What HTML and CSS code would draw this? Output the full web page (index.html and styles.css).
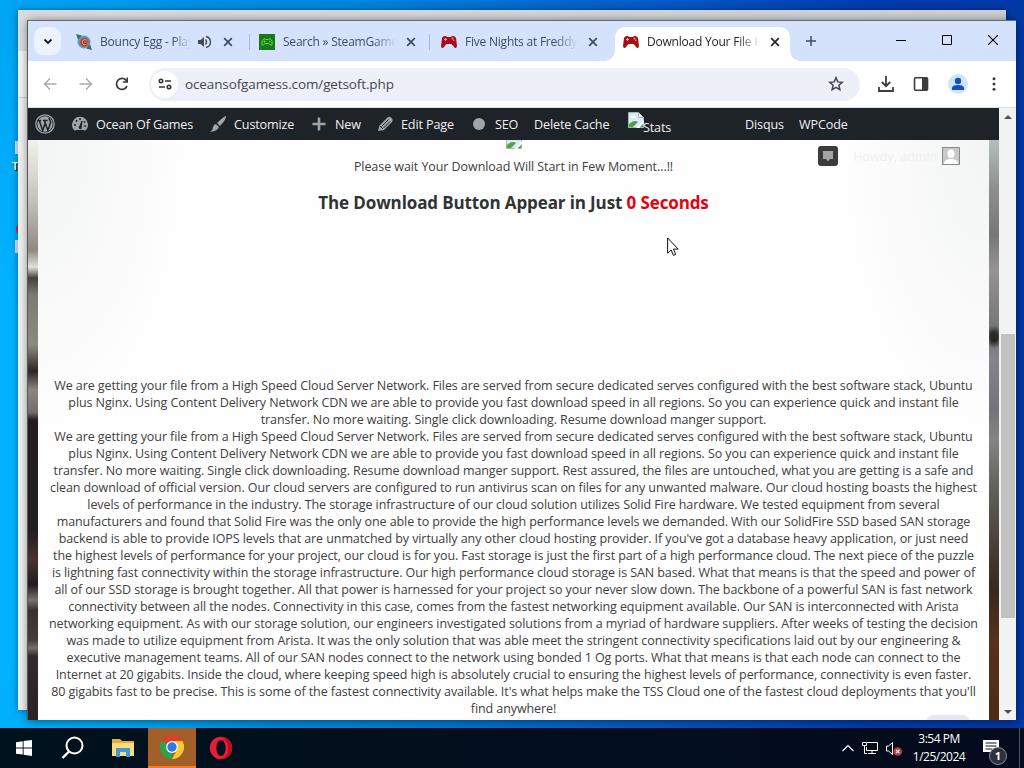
FILE: index.html
```html
<!DOCTYPE html>
<html lang="en">
<head>
  <meta charset="UTF-8" />
  <meta name="viewport" content="width=device-width, initial-scale=1.0"/>
  <title>Download Your File</title>
  <link rel="stylesheet" href="styles.css">
</head>
<body>

  <svg class="sprites" aria-hidden="true">
    <symbol id="x" viewBox="0 0 10 10"><path d="M1.2 1.2l7.6 7.6M8.8 1.2L1.2 8.8" fill="none" stroke="currentColor" stroke-width="1.7"/></symbol>
    <symbol id="gamepad" viewBox="0 0 16 16">
      <path d="M1 4q1-2.500 4-2l1 1h4l1-1q3-.5 4 2l1 8q-.5 3-2.500 1.500L10.500 10h-5L2.500 13.500Q.5 15 0 12z" fill="#a80d14"/>
      <path d="M3 5.500h3M4.500 4v3" stroke="#e9a0a0" stroke-width="1"/>
      <circle cx="11.500" cy="4.500" r="1" fill="#e9a0a0"/><circle cx="12.800" cy="6.300" r=".8" fill="#e9a0a0"/>
    </symbol>
    <symbol id="broken" viewBox="0 0 16 16">
      <path d="M.5.5h10l5 5v10H.5z" fill="#dce9f7" stroke="#a9b4b5"/>
      <path d="M10.500.5v5h5z" fill="#fff" stroke="#a9b4b5"/>
      <path d="M3 6q0-2 2-2 2-1.500 3 1v1z" fill="#fff"/>
      <path d="M1 15v-3q5-5 9-2l-5 5z" fill="#54a043"/>
      <path d="M16 8L8 16h3l5-5z" fill="#fff"/><path d="M12 15l3-3v3z" fill="#54a043"/>
    </symbol>
  </svg>

  <!-- desktop icons half hidden by the windows -->
  <div class="desk-icon one"><i></i><b>T</b></div>
  <div class="desk-icon two"><u></u><i></i></div>

  <div class="window-back"><div class="back-tabs"></div><div class="back-bar"></div></div>

  <div class="window">
    <div class="tabs">
      <div class="tab-search"><svg width="10" height="7" viewBox="0 0 10 7"><path d="M1.500 1.500L5 5l3.500-3.500" fill="none" stroke="#1b1d21" stroke-width="1.900"/></svg></div>
      <div class="tab first">
        <svg class="fav" viewBox="0 0 16 16"><circle cx="8" cy="8" r="6.500" fill="#4fa3cf"/><path d="M0 0l6 1.500L2 6zM16 16l-6-1.500 4-4.500z" fill="#3f7568"/><circle cx="8.200" cy="8.200" r="4.800" fill="#dd4f2c"/><path d="M10.800 6.300Q7 4.500 6.200 8.300q.3 3.200 4 1.900" fill="none" stroke="#2f3d8a" stroke-width="2.400"/><path d="M10.800 6.300Q7 4.500 6.200 8.300q.3 3.200 4 1.900" fill="none" stroke="#ff8a4a" stroke-width="1.200"/></svg>
        <span class="title short">Bouncy Egg - Play</span>
        <svg class="sound" viewBox="0 0 14 14"><path d="M1 5v4h2.500L7 12V2L3.500 5z" fill="#454b59"/><path d="M8.500 4.500q2 2.500 0 5M9 1.500q4.500 1 4.500 5.500T9 12.500" fill="none" stroke="#454b59" stroke-width="1.400"/></svg>
        <svg class="close"><use href="#x"/></svg>
      </div>
      <div class="tab">
        <svg class="fav" viewBox="0 0 16 16"><path d="M0 0h16v16H0z" fill="#167b16"/><path d="M3 11q-1-5 2-6.500l1.500 1h3l1.500-1Q14 6 13 11q-1.500 1-3-1.500H6Q4.500 12 3 11zM4.500 7.500h2M5.500 6.500v2M10 7.500h1.500" fill="none" stroke="#65d94f" stroke-width="1"/></svg>
        <span class="title">Search » SteamGame</span>
        <svg class="close"><use href="#x"/></svg>
      </div>
      <div class="tab">
        <svg class="fav"><use href="#gamepad"/></svg>
        <span class="title">Five Nights at Freddy</span>
        <svg class="close"><use href="#x"/></svg>
      </div>
      <div class="tab active">
        <svg class="fav"><use href="#gamepad"/></svg>
        <span class="title">Download Your File H</span>
        <svg class="close"><use href="#x"/></svg>
      </div>
      <svg class="new-tab" width="10" height="10" viewBox="0 0 10 10"><path d="M5 0v10M0 5h10" stroke="#3f4a66" stroke-width="1.500"/></svg>
      <div class="controls">
        <svg width="10" height="10" viewBox="0 0 10 10"><path d="M0 5.500h10" stroke="#000"/></svg>
        <svg width="10" height="10" viewBox="0 0 10 10"><path d="M.5.5h9v9h-9z" fill="none" stroke="#000"/></svg>
        <svg width="10" height="10" viewBox="0 0 10 10"><path d="M0 0l10 10M10 0L0 10" stroke="#000" stroke-width="1.100"/></svg>
      </div>
    </div>

    <div class="toolbar">
      <svg class="nav" viewBox="0 0 14 14"><path d="M13.500 7H2M7 1.500L1.500 7 7 12.500" fill="none" stroke="#abadb1" stroke-width="1.500"/></svg>
      <svg class="nav" viewBox="0 0 14 14"><path d="M.5 7H12M7 1.500L12.500 7 7 12.500" fill="none" stroke="#abadb1" stroke-width="1.500"/></svg>
      <svg class="nav" viewBox="0 0 14 14"><path d="M12 9.200A5.500 5.500 0 1 1 11 3.200L12.500 5" fill="none" stroke="#36383b" stroke-width="1.700"/><path d="M13 .5v5.200H7.800V4.200h3.600V.5z" fill="#36383b"/></svg>
      <div class="address">
        <span class="site-info"><svg width="14" height="12" viewBox="0 0 14 12"><circle cx="3" cy="3" r="1.700"/><path d="M7 3h6M1 9h6"/><circle cx="11" cy="9" r="1.700"/></svg></span>
        <span class="url">oceansofgamess.com/getsoft.php</span>
        <svg class="star" width="16" height="16" viewBox="0 0 16 16"><path d="M8 1.700l1.800 4.200 4.500.4-3.400 3 1 4.500L8 11.400l-3.900 2.400 1-4.500-3.400-3 4.500-.4z" fill="none" stroke="#44464a" stroke-width="1.500"/></svg>
      </div>
      <div class="actions">
        <svg width="16" height="16" viewBox="0 0 16 16"><path d="M8 0v10M3.800 6L8 10.200 12.200 6M1 11v4h14v-4" fill="none" stroke="#3c3d40" stroke-width="1.800"/></svg>
        <svg width="16" height="16" viewBox="0 0 16 16"><rect x="1.500" y="1.800" width="13" height="12.400" rx="1" fill="none" stroke="#3c3d40" stroke-width="1.600"/><path d="M9 2h5.500v12H9z" fill="#3c3d40"/></svg>
        <svg width="20" height="20" viewBox="0 0 20 20"><circle cx="10" cy="10" r="10" fill="#d0e2fc"/><circle cx="10" cy="7" r="3.200" fill="#1550b8"/><path d="M4 16v-2q0-3 6-3t6 3v2z" fill="#1550b8"/></svg>
        <svg class="kebab" width="4" height="16" viewBox="0 0 4 16"><circle cx="2" cy="2.700" r="1.500"/><circle cx="2" cy="8" r="1.500"/><circle cx="2" cy="13.300" r="1.500"/></svg>
      </div>
    </div>

    <div class="viewport">
      <div class="page">
        <div class="adminbar">
          <svg class="wp" viewBox="0 0 20 20"><circle cx="10" cy="10" r="9.200" fill="none" stroke="#a0a5aa" stroke-width="1.300"/><circle cx="10" cy="10" r="7.700" fill="#a0a5aa"/><path d="M2.500 6.500h3.800M8 6.500h4.500M4.200 6.500l3.500 10L10.200 9M9.300 6.500l3.600 10L15.600 8.500Q15 5 13.500 4" fill="none" stroke="#1d2327" stroke-width="1.500"/></svg>
          <a class="item games"><svg viewBox="0 0 16 16"><path d="M2 14A8 8 0 1 1 14 14q-1 1-2 0H4q-1 1-2 0z" fill="#a0a5aa"/><path d="M7 12l3-7-1 8z" fill="#1d2327" stroke="#1d2327"/><g fill="#1d2327"><circle cx="3" cy="9" r="1"/><circle cx="4.500" cy="5" r="1"/><circle cx="8" cy="3.200" r="1"/><circle cx="12.500" cy="6" r="1"/><circle cx="13" cy="10" r="1"/></g></svg>Ocean Of Games</a>
          <a class="item customize"><svg viewBox="0 0 16 16"><path d="M16 0q.5 3-6 10L7 7q6-6 9-7zM6 8l3 3q-1 4-9 5 3-2 3-5 1-3 3-3z" fill="#a0a5aa"/></svg>Customize</a>
          <a class="item new"><svg viewBox="0 0 16 16"><path d="M8 1.500v13M1.500 8h13" stroke="#a0a5aa" stroke-width="2.600"/></svg>New</a>
          <a class="item edit"><svg viewBox="0 0 16 16"><path d="M1 15l1.500-5.500 8-8q2-1.500 4 .5t.5 4l-8 8z" fill="#a0a5aa"/><path d="M4.500 10.500l7-7M6.500 12l6.500-6.500M3 10l3 3" stroke="#1d2327" fill="none"/></svg>Edit Page</a>
          <a class="item seo"><i></i>SEO</a>
          <a class="item cache">Delete Cache</a>
          <a class="item stats"><svg viewBox="0 0 16 16"><use href="#broken"/></svg><span>Stats</span></a>
          <a class="item disqus">Disqus</a>
          <a class="item">WPCode</a>
        </div>
        <div class="site">
          <div class="content">
            <div class="missing"><svg viewBox="0 0 16 16"><use href="#broken"/></svg></div>
            <p class="wait">Please wait Your Download Will Start in Few Moment...!!</p>
            <h2>The Download Button Appear in Just <span>0 Seconds</span></h2>
            <p class="about">
              We are getting your file from a High Speed Cloud Server Network. Files are served from secure dedicated serves configured with the best software stack, Ubuntu<br>
              plus Nginx. Using Content Delivery Network CDN we are able to provide you fast download speed in all regions. So you can experience quick and instant file<br>
              transfer. No more waiting. Single click downloading. Resume download manger support.<br>
              We are getting your file from a High Speed Cloud Server Network. Files are served from secure dedicated serves configured with the best software stack, Ubuntu<br>
              plus Nginx. Using Content Delivery Network CDN we are able to provide you fast download speed in all regions. So you can experience quick and instant file<br>
              transfer. No more waiting. Single click downloading. Resume download manger support. Rest assured, the files are untouched, what you are getting is a safe and<br>
              clean download of official version. Our cloud servers are configured to run antivirus scan on files for any unwanted malware. Our cloud hosting boasts the highest<br>
              levels of performance in the industry. The storage infrastructure of our cloud solution utilizes Solid Fire hardware. We tested equipment from several<br>
              manufacturers and found that Solid Fire was the only one able to provide the high performance levels we demanded. With our SolidFire SSD based SAN storage<br>
              backend is able to provide IOPS levels that are unmatched by virtually any other cloud hosting provider. If you've got a database heavy application, or just need<br>
              the highest levels of performance for your project, our cloud is for you. Fast storage is just the first part of a high performance cloud. The next piece of the puzzle<br>
              is lightning fast connectivity within the storage infrastructure. Our high performance cloud storage is SAN based. What that means is that the speed and power of<br>
              all of our SSD storage is brought together. All that power is harnessed for your project so your never slow down. The backbone of a powerful SAN is fast network<br>
              connectivity between all the nodes. Connectivity in this case, comes from the fastest networking equipment available. Our SAN is interconnected with Arista<br>
              networking equipment. As with our storage solution, our engineers investigated solutions from a myriad of hardware suppliers. After weeks of testing the decision<br>
              was made to utilize equipment from Arista. It was the only solution that was able meet the stringent connectivity specifications laid out by our engineering &amp;<br>
              executive management teams. All of our SAN nodes connect to the network using bonded 1 Og ports. What that means is that each node can connect to the<br>
              Internet at 20 gigabits. Inside the cloud, where keeping speed high is absolutely crucial to ensuring the highest levels of performance, connectivity is even faster.<br>
              80 gigabits fast to be precise. This is some of the fastest connectivity available. It's what helps make the TSS Cloud one of the fastest cloud deployments that you'll<br>
              find anywhere!
            </p>
            <div class="account">
              <span class="notes"><svg width="12" height="12" viewBox="0 0 12 12"><path d="M1 1h10v8H8l-2 2.500L4 9H1z" fill="#a5a5a5"/></svg></span>
              <span class="howdy">Howdy, admin</span>
              <svg class="avatar" viewBox="0 0 18 18"><path d="M.5.5h17v17H.5z" fill="#c9c9c9" stroke="#888"/><ellipse cx="9" cy="6.800" rx="3.500" ry="4.200" fill="#fff"/><path d="M2 17q0-4 5-5h4q5 1 5 5z" fill="#fff"/></svg>
            </div>
            <div class="bubble"></div>
          </div>
        </div>
      </div>
      <div class="scrollbar"><i class="up"></i><div class="thumb"></div><i class="down"></i></div>
    </div>
  </div>

  <svg class="cursor" width="12" height="20" viewBox="0 0 12 20"><path d="M.6 1v15.200l3.500-3.300 2.300 5.500 2.300-1-2.300-5.300h4.800z" fill="#fff" stroke="#111"/></svg>

  <div class="taskbar">
    <div class="app"><svg width="16" height="16" viewBox="0 0 16 16"><path d="M0 2.300l6.700-1v6.200H0zM7.600 1.100L16 0v7.500H7.600zM0 8.400h6.700v6.200L0 13.700zM7.600 8.400H16V16l-8.400-1.200z" fill="#fff"/></svg></div>
    <div class="app"><svg width="24" height="24" viewBox="0 0 24 24"><circle cx="13.500" cy="9.500" r="8" fill="none" stroke="#fff" stroke-width="2"/><path d="M8 15.500L1.500 22" stroke="#fff" stroke-width="2.400"/></svg></div>
    <div class="app"><svg width="22" height="20" viewBox="0 0 22 20"><path d="M0 1h8l2 2h12v15H0z" fill="#e4ad35"/><path d="M0 5h22v13H0z" fill="#fbdc7c"/><path d="M4 10h14v9h-4v-5H8v5H4z" fill="#4199d3"/></svg></div>
    <div class="app current"><svg width="24" height="24" viewBox="0 0 24 24"><path d="M12 12L1.600 6A12 12 0 0 1 22.400 6z" fill="#e33b2e"/><path d="M12 12V24A12 12 0 0 1 1.600 6z" fill="#2da24c"/><path d="M12 6h10.400A12 12 0 0 1 12 24l5-9z" fill="#fcc934"/><path d="M12 12L6.800 15 1.600 6z" fill="#2da24c"/><circle cx="12" cy="12" r="6" fill="#fff"/><circle cx="12" cy="12" r="4.700" fill="#2f78e4"/></svg></div>
    <div class="app"><svg width="24" height="24" viewBox="0 0 24 24"><path d="M12 .8A11.200 11.200 0 1 0 12 23.200 11.200 11.200 0 0 0 12 .8zm0 3.200c2.600 0 4.600 3.500 4.600 8s-2 8-4.600 8-4.600-3.500-4.600-8 2-8 4.600-8z" fill="#eb1d34" fill-rule="evenodd"/><path d="M12 .8q11 1 11.200 11.200Q23 22 12 23.200q8-3 7-11.200.5-8-7-11.200z" fill="#b50f22"/></svg></div>
    <div class="tray">
      <svg width="12" height="8" viewBox="0 0 12 8"><path d="M.5 7L6 1.500 11.500 7" fill="none" stroke="#fff" stroke-width="1.200"/></svg>
      <svg width="16" height="14" viewBox="0 0 16 14"><path d="M5 1.500h10.500v8H4.500V6M10 9.500v3M6 12.500h8M.5 1.500h4v3h-4zM2.500 4.500v8H5" fill="none" stroke="#fff"/></svg>
      <svg width="17" height="15" viewBox="0 0 17 15"><path d="M.5 5v5h2L6.500 13.500v-12L2.500 5z" fill="none" stroke="#fff"/><circle cx="11.700" cy="10.500" r="4.300" fill="#d13438"/><path d="M10 8.800l3.400 3.400M13.400 8.800L10 12.200" stroke="#fff" stroke-width="1.200"/></svg>
    </div>
    <div class="clock">3:54 PM<br>1/25/2024</div>
    <div class="notify"><svg width="16" height="16" viewBox="0 0 16 16"><path d="M0 0h16v12h-5v4l-4-4H0z" fill="#fff"/><path d="M2.500 3h11M2.500 6h11M2.500 9h7" stroke="#071024" stroke-width="1.200"/></svg><b>1</b></div>
    <div class="show-desktop"></div>
  </div>

</body>
</html>
```

FILE: styles.css
```css
* {
  box-sizing: border-box;
}

body {
  margin: 0;
  width: 1024px;
  height: 768px;
  overflow: hidden;
  position: relative;
  font-family: "Open Sans", "Noto Sans", sans-serif;
  background:
    radial-gradient(ellipse 300px 600px at 0 480px, #00b2ff 30%, transparent),
    linear-gradient(90deg, #009ff0 0%, #0085dc 35%, #0058c8 65%, #003bb0 85%, #0039a6 100%);
}

svg {
  flex: none;
  display: block;
}

.sprites {
  position: absolute;
  width: 0;
  height: 0;
}

.desk-icon {
  position: absolute;
  left: 12px;
  width: 6px;
  overflow: hidden;
  color: #fff;
}

.desk-icon i {
  display: block;
  width: 3px;
  height: 13px;
  margin-left: 3px;
  background: #d9e8f2;
}

.desk-icon b {
  display: block;
  font-size: 11px;
  line-height: 12px;
  margin-top: 6px;
  text-shadow: 1px 1px 1px #000;
}

.one {
  top: 141px;
}

.two {
  top: 221px;
}

.two u {
  display: block;
  width: 16px;
  height: 16px;
  margin: 0 0 3px 4px;
  border-radius: 50%;
  background: #c8284c;
}

/* windows */
.window-back {
  position: absolute;
  left: 18px;
  top: 10px;
  width: 988px;
  height: 700px;
  background: #f0f0f0;
  box-shadow: 0 0 7px rgba(0, 0, 0, 0.4);
}

.back-tabs {
  height: 41px;
  background: linear-gradient(90deg, #dcdce0, #cdcfd2);
}

.back-bar {
  height: 47px;
  border-bottom: 1px solid #cbd3d8;
  background: #f3f4f6;
}

.window {
  position: absolute;
  left: 28px;
  top: 20px;
  width: 988px;
  height: 700px;
  display: flex;
  flex-direction: column;
  border-top: 1px solid #626d77;
  background: #fff;
  box-shadow: -1px 0 0 #55595c, 0 1px 9px rgba(0, 0, 0, 0.5);
}

.tabs {
  display: flex;
  align-items: center;
  height: 40px;
  background: #d5e2fc;
}

.tab-search {
  display: flex;
  align-items: center;
  justify-content: center;
  width: 27px;
  height: 28px;
  margin: 0 8px 0 6px;
  border-radius: 9px;
  background: #ecf2fe;
}

.tab {
  display: flex;
  align-items: center;
  position: relative;
  width: 182px;
  height: 34px;
  padding-left: 8px;
  margin-top: 1px;
  color: #414b62;
}

.first {
  width: 184px;
  padding-left: 7px;
}

.tab:nth-child(2)::after,
.tab:nth-child(3)::after {
  content: "";
  position: absolute;
  right: 3px;
  top: 9px;
  width: 1px;
  height: 16px;
  background: #a5b9df;
}

.first + .tab {
  margin-left: -2px;
}

.fav {
  width: 16px;
  height: 16px;
  margin-right: 8px;
}

.title {
  width: 113px;
  overflow: hidden;
  white-space: nowrap;
  font-size: 12px;
  letter-spacing: -0.22px;
  -webkit-mask-image: linear-gradient(90deg, #000 80%, transparent);
  mask-image: linear-gradient(90deg, #000 80%, transparent);
}

.short {
  width: 91px;
}

.sound {
  width: 14px;
  height: 14px;
  margin: 0 2px 0 6px;
}

.close {
  width: 10px;
  height: 10px;
  margin-left: 10px;
}

.active {
  width: 175px;
  height: 34px;
  margin: 6px 0 0;
  padding-bottom: 5px;
  align-self: flex-start;
  border-radius: 10px 10px 0 0;
  background: #fff;
  color: #23262b;
}

.active::before,
.active::after {
  content: "";
  position: absolute;
  bottom: 0;
  width: 10px;
  height: 10px;
}

.active::before {
  left: -10px;
  background: radial-gradient(circle at 0 0, #d5e2fc 9.5px, #fff 10px);
}

.active::after {
  right: -10px;
  background: radial-gradient(circle at 100% 0, #d5e2fc 9.5px, #fff 10px);
}

.new-tab {
  margin-left: 16px;
}

.controls {
  display: flex;
  gap: 36px;
  margin: -2px 18px 0 auto;
}

.toolbar {
  display: flex;
  align-items: center;
  height: 47px;
  padding-left: 15px;
  border-bottom: 1px solid #dde2e8;
  background: #fff;
}

.nav {
  width: 14px;
  height: 14px;
  margin-right: 22px;
}

.address {
  display: flex;
  align-items: center;
  width: 711px;
  height: 33px;
  margin-left: -2px;
  padding: 0 16px 0 2px;
  border-radius: 17px;
  background: #edeff9;
}

.site-info {
  display: flex;
  align-items: center;
  justify-content: center;
  width: 27px;
  height: 27px;
  border-radius: 50%;
  background: #fff;
  fill: none;
  stroke: #323438;
  stroke-width: 1.6;
}

.url {
  margin-left: 7px;
  font-size: 13.5px;
  letter-spacing: -0.12px;
  color: #45474f;
}

.star {
  margin-left: auto;
}

.actions {
  display: flex;
  align-items: center;
  margin-left: 18px;
  gap: 19px;
  fill: #3c3d40;
}

.kebab {
  margin-left: 5px;
}

.viewport {
  display: flex;
  flex: 1;
  min-height: 0;
}

.page {
  display: flex;
  flex-direction: column;
  width: 971px;
}

.adminbar {
  display: flex;
  align-items: center;
  height: 32px;
  padding-left: 7px;
  background: #1d2327;
  color: #f0f0f1;
  font-size: 12.6px;
  letter-spacing: -0.14px;
}

.wp {
  width: 20px;
  height: 20px;
  margin-right: 17px;
}

.item {
  display: flex;
  align-items: center;
  height: 32px;
  white-space: nowrap;
}

.item svg {
  width: 16px;
  height: 16px;
  margin-right: 8px;
}

.games {
  width: 138px;
}

.customize {
  width: 101px;
}

.new {
  width: 66px;
}

.edit {
  width: 96px;
}

.seo {
  width: 61px;
}

.seo i {
  width: 12px;
  height: 12px;
  margin-right: 10px;
  border-radius: 50%;
  background: #a0a5aa;
}

.cache {
  width: 94px;
}

.stats {
  width: 117px;
}

.stats svg {
  margin: -8px 0 0;
}

.stats span {
  margin-top: 7px;
  margin-left: -1px;
}

.disqus {
  width: 54px;
}

/* page body, photo edges show on both sides */
.site {
  flex: 1;
  padding: 0 10px;
  background:
    linear-gradient(180deg, #f1f2ed 0, #c5c2bc 60px, #8f897f 110px, #e1e1dd 127px, #44403b 138px, #7b7b73 155px, #8b8a80 205px, #2c2826 231px, #8a8681 250px, #73706c 272px, #231f20 280px, #211e20 390px, #4b3232 420px, #211d1f 445px, #77736d 460px, #39332f 470px, #443d38 500px, #766f69 508px, #352a2b 516px, #2b2223 580px) left / 10px 100% no-repeat,
    radial-gradient(ellipse 9px 12px at 966px 197px, #252823 35%, transparent),
    linear-gradient(180deg, #b3bfbd 0, #8d8d8d 50px, #777 95px, #969493 130px, #777 185px, #85838b 220px, #74737a 270px, #858482 300px, #61645f 345px, #4a3f35 405px, #37291f 450px, #54321d 500px, #4b2b18 580px) right / 10px 100% no-repeat;
}

.content {
  position: relative;
  height: 100%;
  overflow: hidden;
  text-align: center;
  color: #404040;
  background:
    radial-gradient(ellipse 150px 300px at 0 0, #f3f4f4, transparent),
    radial-gradient(ellipse 150px 300px at 100% 0, #f3f4f4, transparent),
    #fefefe;
}

.missing {
  height: 9px;
  overflow: hidden;
  display: flex;
  justify-content: center;
  align-items: flex-end;
}

.missing svg {
  width: 16px;
  height: 16px;
}

.wait {
  margin: 9px 0 0;
  font-size: 12.5px;
  line-height: 17px;
  letter-spacing: -0.07px;
}

h2 {
  margin: 16px 0 0;
  font-size: 17px;
  line-height: 24px;
  letter-spacing: -0.12px;
  color: #303334;
}

h2 span {
  color: #e8000f;
}

.about {
  margin: 162px 0 0;
  font-size: 12.5px;
  line-height: 17px;
  white-space: nowrap;
  letter-spacing: -0.085px;
}

.account {
  position: absolute;
  top: 6px;
  right: 29px;
  display: flex;
  align-items: center;
}

.notes {
  display: flex;
  align-items: center;
  justify-content: center;
  width: 20px;
  height: 20px;
  border-radius: 3px;
  background: #3c3c3c;
}

.howdy {
  width: 89px;
  margin-left: 15px;
  text-align: left;
  white-space: nowrap;
  font-size: 12.6px;
  color: #f0f0f1;
}

.avatar {
  width: 18px;
  height: 18px;
}

.bubble {
  position: absolute;
  right: 19px;
  bottom: -19px;
  width: 44px;
  height: 24px;
  border-radius: 8px;
  background: #e8e8ec;
}

.scrollbar {
  display: flex;
  flex-direction: column;
  align-items: center;
  width: 17px;
  padding: 7px 0 6px;
  background: #f1f2f2;
}

.up,
.down {
  border: 4px solid transparent;
  border-top: 0;
  border-bottom-color: #505050;
}

.down {
  margin-top: auto;
  border-top: 4px solid #505050;
  border-bottom: 0;
}

.thumb {
  width: 14px;
  height: 284px;
  margin-top: 215px;
  background: #c1c1c1;
}

.cursor {
  position: absolute;
  left: 667px;
  top: 237px;
}

/* taskbar */
.taskbar {
  position: absolute;
  left: 0;
  bottom: 0;
  display: flex;
  align-items: center;
  width: 100%;
  height: 40px;
  color: #fff;
  background: linear-gradient(90deg, #00121d, #020e1d 50%, #030b1c);
}

.app {
  display: flex;
  align-items: center;
  justify-content: center;
  width: 49px;
  height: 40px;
}

.app:first-child {
  width: 48px;
}

.app:nth-child(3) {
  width: 51px;
}

.current {
  width: 48px;
  border-bottom: 2px solid #f77b20;
  background: #a25f27;
}

.tray {
  display: flex;
  align-items: center;
  gap: 8px;
  margin-left: auto;
}

.clock {
  width: 60px;
  margin-left: 6px;
  font-size: 12px;
  line-height: 18px;
  letter-spacing: -0.5px;
  text-align: center;
}

.notify {
  position: relative;
  margin: 0 20px 0 14px;
}

.notify b {
  position: absolute;
  left: 6px;
  top: 7px;
  width: 18px;
  height: 18px;
  border: 1px solid #888e98;
  border-radius: 50%;
  background: #2b303c;
  font-size: 11px;
  line-height: 16px;
  text-align: center;
}

.show-desktop {
  width: 5px;
  height: 40px;
  border-left: 1px solid #505764;
}
```
